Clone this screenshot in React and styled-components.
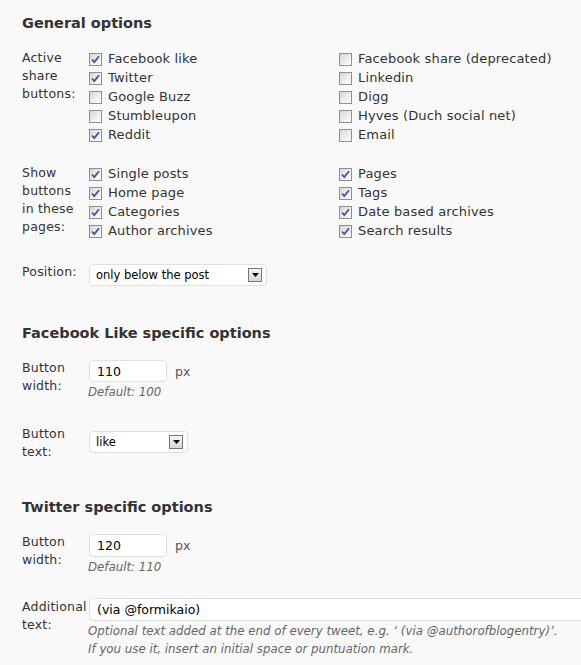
import React from 'react';
import styled, { createGlobalStyle } from 'styled-components';

const GlobalStyle = createGlobalStyle`
  html, body {
    margin: 0;
    padding: 0;
    background: #f9f9f9;
    overflow: hidden;
  }
  body {
    font-family: "DejaVu Sans", Verdana, sans-serif;
    color: #333;
  }
`;

const Page = styled.div`
  padding: 13px 0 0 22px;
  overflow: hidden;
`;

const SectionTitle = styled.h3`
  margin: ${props => props.top || '0'} 0 0;
  font-size: 14.5px;
  font-weight: 700;
  line-height: 21px;
  color: #333;
`;

const FormRow = styled.div`
  display: grid;
  grid-template-columns: 67px 1fr;
  margin-top: ${props => props.top || '0'};
`;

const RowLabel = styled.div`
  font-size: 12.5px;
  line-height: 18px;
  color: #333;
  letter-spacing: 0.2px;
`;

const CheckColumns = styled.div`
  display: grid;
  grid-template-columns: 250px 1fr;
`;

const CheckList = styled.div`
  display: flex;
  flex-direction: column;
`;

const CheckItem = styled.label`
  display: flex;
  align-items: center;
  gap: 6px;
  height: 19px;
  font-size: 13px;
  color: #333;
  letter-spacing: 0.15px;
  white-space: nowrap;
`;

const Box = styled.span`
  width: 11px;
  height: 11px;
  border: 1px solid #8f8f8f;
  background: linear-gradient(135deg, #d6d6d6 0%, #f0f0f0 60%, #ffffff 100%);
  display: flex;
  align-items: center;
  justify-content: center;
  flex-shrink: 0;
  margin-top: 2px;
`;

const Field = styled.div`
  display: flex;
  flex-direction: column;
  padding-top: ${props => props.top || '0'};
  min-width: 0;
`;

const InputLine = styled.div`
  display: flex;
  align-items: center;
  gap: 8px;
`;

const TextInput = styled.div`
  box-sizing: border-box;
  width: ${props => props.width};
  height: ${props => props.height || '22px'};
  border: 1px solid #dfdfdf;
  border-radius: 4px;
  background: #fff;
  padding: 0 7px;
  display: flex;
  align-items: center;
  font-size: 12.5px;
  color: #000;
  flex-shrink: 0;
`;

const Unit = styled.span`
  font-size: 12.5px;
  color: #555;
`;

const Hint = styled.div`
  font-size: 11.8px;
  font-style: italic;
  color: #666;
  line-height: 17.5px;
  margin-top: ${props => props.top || '2px'};
  margin-left: -1px;
  white-space: nowrap;
`;

const SelectBox = styled.div`
  box-sizing: border-box;
  width: ${props => props.width};
  height: 22px;
  border: 1px solid #dfdfdf;
  border-radius: 4px;
  background: #fff;
  display: flex;
  align-items: center;
  justify-content: space-between;
  padding: 0 4px 0 6px;
  font-size: 11.5px;
  color: #000;
`;

const Arrow = styled.span`
  box-sizing: border-box;
  width: 14px;
  height: 14px;
  border: 1px solid #777;
  background: linear-gradient(180deg, #f4f4f4, #d8d8d8);
  display: flex;
  align-items: center;
  justify-content: center;
`;

const CheckMark = () => (
  <svg width="9" height="9" viewBox="0 0 9 9">
    <path d="M1 4.5 L3.3 7 L8 1.2" fill="none" stroke="#3d55a8" strokeWidth="1.8" />
  </svg>
);

const Checkbox = ({ checked, children }) => (
  <CheckItem>
    <Box>{checked && <CheckMark />}</Box>
    {children}
  </CheckItem>
);

const Select = ({ width, children }) => (
  <SelectBox width={width}>
    <span>{children}</span>
    <Arrow>
      <svg width="7" height="4" viewBox="0 0 7 4">
        <path d="M0 0 H7 L3.5 4 Z" fill="#000" />
      </svg>
    </Arrow>
  </SelectBox>
);

const shareLeft = [
  ['Facebook like', true],
  ['Twitter', true],
  ['Google Buzz', false],
  ['Stumbleupon', false],
  ['Reddit', true],
];
const shareRight = [
  ['Facebook share (deprecated)', false],
  ['Linkedin', false],
  ['Digg', false],
  ['Hyves (Duch social net)', false],
  ['Email', false],
];
const pagesLeft = ['Single posts', 'Home page', 'Categories', 'Author archives'];
const pagesRight = ['Pages', 'Tags', 'Date based archives', 'Search results'];

export default function App() {
  return (
    <>
      <GlobalStyle />
      <Page>
        <SectionTitle>General options</SectionTitle>

        <FormRow top="15px">
          <RowLabel>Active<br />share<br />buttons:</RowLabel>
          <CheckColumns>
            <CheckList>
              {shareLeft.map(([t, c]) => <Checkbox key={t} checked={c}>{t}</Checkbox>)}
            </CheckList>
            <CheckList>
              {shareRight.map(([t, c]) => <Checkbox key={t} checked={c}>{t}</Checkbox>)}
            </CheckList>
          </CheckColumns>
        </FormRow>

        <FormRow top="20px">
          <RowLabel>Show<br />buttons<br />in these<br />pages:</RowLabel>
          <CheckColumns>
            <CheckList>
              {pagesLeft.map(t => <Checkbox key={t} checked>{t}</Checkbox>)}
            </CheckList>
            <CheckList>
              {pagesRight.map(t => <Checkbox key={t} checked>{t}</Checkbox>)}
            </CheckList>
          </CheckColumns>
        </FormRow>

        <FormRow top="23px">
          <RowLabel>Position:</RowLabel>
          <Field top="1px">
            <Select width="178px">only below the post</Select>
          </Field>
        </FormRow>

        <SectionTitle top="37px">Facebook Like specific options</SectionTitle>

        <FormRow top="15px">
          <RowLabel>Button<br />width:</RowLabel>
          <Field top="1px">
            <InputLine>
              <TextInput width="78px">110</TextInput>
              <Unit>px</Unit>
            </InputLine>
            <Hint>Default: 100</Hint>
          </Field>
        </FormRow>

        <FormRow top="23px">
          <RowLabel>Button<br />text:</RowLabel>
          <Field top="6px">
            <Select width="99px">like</Select>
          </Field>
        </FormRow>

        <SectionTitle top="36px">Twitter specific options</SectionTitle>

        <FormRow top="15px">
          <RowLabel>Button<br />width:</RowLabel>
          <Field top="1px">
            <InputLine>
              <TextInput width="78px" height="23px">120</TextInput>
              <Unit>px</Unit>
            </InputLine>
            <Hint>Default: 110</Hint>
          </Field>
        </FormRow>

        <FormRow top="22px">
          <RowLabel>Additional<br />text:</RowLabel>
          <Field>
            <TextInput width="520px" height="23px">(via @formikaio)</TextInput>
            <Hint top="2px">
              Optional text added at the end of every tweet, e.g. ‘ (via @authorofblogentry)’.
              <br />
              If you use it, insert an initial space or puntuation mark.
            </Hint>
          </Field>
        </FormRow>
      </Page>
    </>
  );
}
